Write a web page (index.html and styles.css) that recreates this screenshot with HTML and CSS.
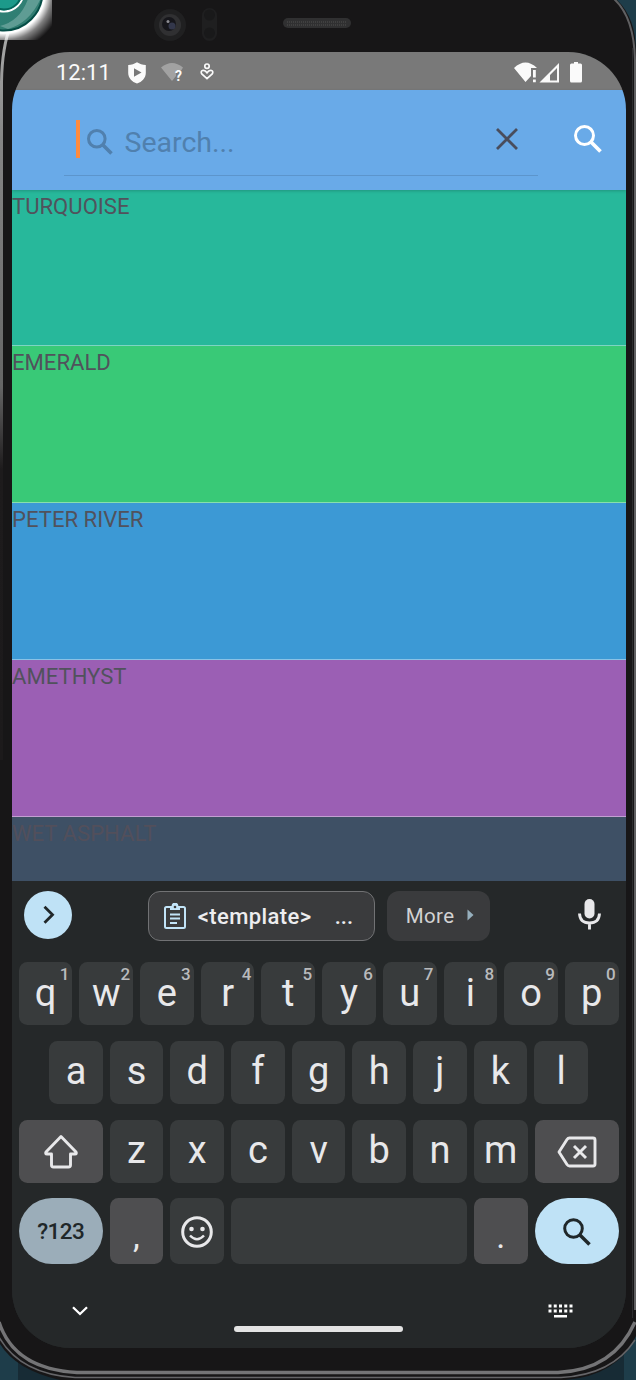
FILE: index.html
```html
<!DOCTYPE html>
<html lang="en">
<head>
<meta charset="utf-8">
<title>Color search</title>
<link rel="stylesheet" href="styles.css">
</head>
<body>
<div class="device">
<svg class="frame" viewBox="0 0 636 1380" aria-hidden="true">
  <defs>
    <linearGradient id="rimL" x1="0" y1="0" x2="0" y2="1380" gradientUnits="userSpaceOnUse"><stop offset="0" stop-color="#b4b4b4"/><stop offset=".1" stop-color="#868686"/><stop offset=".28" stop-color="#666"/><stop offset=".34" stop-color="#1d1b1c"/><stop offset="1" stop-color="#1a1819"/></linearGradient>
    <radialGradient id="glow" cx="4" cy="-8" r="59" gradientUnits="userSpaceOnUse"><stop offset=".7" stop-color="#fff"/><stop offset=".82" stop-color="#fff" stop-opacity=".45"/><stop offset="1" stop-color="#fff" stop-opacity="0"/></radialGradient>
    <linearGradient id="teal" x1="0" y1="0" x2="1" y2="1"><stop offset="0" stop-color="#8fd0c4"/><stop offset=".5" stop-color="#2b8377"/><stop offset="1" stop-color="#35796e"/></linearGradient>
  </defs>
  <rect width="636" height="1380" fill="#1e3d4a"/>
  <rect x="18" y="1340" width="606" height="40" fill="#172b35"/>
  <path d="M0 0H617Q636 18 636 52V1336Q617 1376 565 1380H60Q16 1370 0 1344Z" fill="#171617"/>
  <path d="M11 24Q2 47 1.500 82V760" fill="none" stroke="url(#rimL)" stroke-width="3"/>
  <path d="M613-2Q634 16 635 60V1310" fill="none" stroke="#606062" stroke-width="2"/>
  <path d="M632.500 48V1318" stroke="#2c2c2e" stroke-width="1"/>
  <path d="M-1 1322Q14 1369 77 1372.500H558Q614 1370 635 1322" fill="none" stroke="#747476" stroke-width="3.500"/>
  <path d="M-1 1337Q20 1374 75 1377.500H561Q612 1375 635 1340" fill="none" stroke="#656568" stroke-width="1.500"/>
  <circle cx="170" cy="25" r="16" fill="#202021"/><circle cx="170" cy="25" r="11" fill="#303032"/><circle cx="169" cy="24" r="7" fill="#16161b"/><circle cx="172" cy="26" r="3.500" fill="#33374b"/><circle cx="168" cy="21.500" r="1.500" fill="#8d8d93"/>
  <rect x="202" y="8" width="15" height="33" rx="7.500" fill="#1f1f20"/><circle cx="209.500" cy="15" r="5.500" fill="#19191a"/><circle cx="209.500" cy="33" r="5.500" fill="#19191a"/>
  <rect x="283" y="18" width="68" height="10" rx="5" fill="#303031"/><path d="M287 22H347M287 25H347" stroke="#454546" stroke-width="1.500" stroke-dasharray="1 1"/>
  <svg width="52" height="40" viewBox="0 0 52 40"><circle cx="4" cy="-8" r="60" fill="url(#glow)"/><circle cx="4" cy="-8" r="41" fill="#fff"/><circle cx="4" cy="-8" r="38.500" fill="url(#teal)" stroke="#064d46" stroke-width="2"/><path d="M0 26Q20 21 28-1L40 0Q29 23 8 29Z" fill="#73aaa3" opacity=".7"/><circle cx="4" cy="-8" r="19.500" fill="#1c9a8a" stroke="#fff" stroke-width="2"/><circle cx="4" cy="-8" r="17.500" fill="none" stroke="#05675c" stroke-width="2"/></svg>
</svg>

<main class="screen">
  <header class="status">
    <span class="clock">12:11</span>
    <svg class="st-shield" viewBox="0 0 18 22"><path d="M9 .3C6.500 2 3.500 2.800.2 3V11C.2 16 4 20 9 21.500C14 20 17.800 16 17.800 11V3C14.500 2.800 11.500 2 9 .3Z" fill="#fafafa"/><path d="M6 6.300V14.700L13.500 10.500Z" fill="#777"/></svg>
    <svg class="st-wifi" viewBox="0 0 23 19"><path d="M0 4.500Q11-4.500 22 4.500L20.500 7H15V13L11 18Z" fill="#a2a2a2"/><text x="14" y="17.500" class="q">?</text></svg>
    <svg class="st-heart" viewBox="0 0 14 18"><g fill="none" stroke="#fafafa" stroke-width="1.700"><circle cx="7" cy="3.200" r="2.200"/><path d="M7 15.700L1.800 11Q.3 8.500 2.500 7.500Q5 6.800 7 9.800Q9 6.800 11.500 7.500Q13.700 8.500 12.200 11Z"/></g></svg>
    <span class="spacer"></span>
    <svg class="st-net" viewBox="0 0 69 21"><g fill="#fafafa"><path d="M0 6Q11.500-5 23 6H17V14L11.500 20Z"/><path d="M19 8H21.800V15.500H19ZM19 17.500H21.800V20.300H19Z"/><path fill-rule="evenodd" d="M45 1V20.500H25.500ZM43 6L36 13V18.500H43Z"/><path d="M60 0H64V1.500H66.500Q68 1.500 68 3V19Q68 20.500 66.500 20.500H57.500Q56 20.500 56 19V3Q56 1.500 57.500 1.500H60Z"/></g></svg>
  </header>
  <div class="appbar">
    <div class="field">
      <i class="caret"></i>
      <svg class="ico-hint" viewBox="0 0 26 26"><g fill="none" stroke="#5080ae" stroke-width="3"><circle cx="9.800" cy="9.800" r="8.300"/><path d="M15.700 15.700L24.500 24.500" stroke-width="3.600"/></g></svg>
      <span class="hint">Search...</span>
      <svg class="ico-close" viewBox="0 0 22 22"><path d="M1 1L21 21M21 1L1 21" stroke="#494d5d" stroke-width="2.800"/></svg>
    </div>
    <svg class="ico-search" viewBox="0 0 28 28"><g fill="none" stroke="#fff" stroke-width="3"><circle cx="10.500" cy="10.500" r="9"/><path d="M17 17L26.500 26.500" stroke-width="3.700"/></g></svg>
  </div>
  <div class="colors">
    <div class="color turquoise">TURQUOISE</div>
    <div class="color emerald">EMERALD</div>
    <div class="color river">PETER RIVER</div>
    <div class="color amethyst">AMETHYST</div>
    <div class="color asphalt">WET ASPHALT</div>
  </div>
  <section class="keyboard">
    <div class="suggest">
      <div class="expand"><svg width="12" height="20" viewBox="0 0 12 20"><path d="M1.500 1.700L9.500 9.700L1.500 17.700" fill="none" stroke="#202729" stroke-width="2.800"/></svg></div>
      <div class="clip"><svg width="24" height="27" viewBox="0 0 24 27"><g fill="none" stroke="#c2e4f8" stroke-width="2"><rect x="2" y="4" width="20" height="21" rx="1.500"/><path d="M7 11.500H17M7 15.500H17M7 20H14"/></g><path d="M7 3H8.600A3.400 3.400 0 0 1 15.400 3H17V7H7Z" fill="#c2e4f8"/><circle cx="12" cy="4" r="1.300" fill="#3a3b3d"/></svg><span class="cliptext">&lt;template&gt;</span><span class="dots">...</span></div>
      <div class="more"><span>More</span><svg width="7" height="12" viewBox="0 0 7 12"><path d="M.5.500L6.500 6L.5 11.500Z" fill="#96afbd"/></svg></div>
      <svg class="mic" viewBox="0 0 23 31"><rect x="6.500" y="0" width="10" height="19.500" rx="5" fill="#e8e8ea"/><path d="M1.500 14.500Q2 24 11.500 24T21.500 14.500M11.500 24V30.500" fill="none" stroke="#e8e8ea" stroke-width="2.900"/></svg>
    </div>
    <div class="row">
      <div class="key">q<sup>1</sup></div><div class="key">w<sup>2</sup></div><div class="key">e<sup>3</sup></div><div class="key">r<sup>4</sup></div><div class="key">t<sup>5</sup></div><div class="key">y<sup>6</sup></div><div class="key">u<sup>7</sup></div><div class="key">i<sup>8</sup></div><div class="key">o<sup>9</sup></div><div class="key">p<sup>0</sup></div>
    </div>
    <div class="row home">
      <div class="key">a</div><div class="key">s</div><div class="key">d</div><div class="key">f</div><div class="key">g</div><div class="key">h</div><div class="key">j</div><div class="key">k</div><div class="key">l</div>
    </div>
    <div class="row">
      <div class="key wide gray"><svg width="36" height="35" viewBox="0 0 36 35"><path d="M18 2.500L33 18Q34 20 32 20H27.500V31Q27.500 33 25.500 33H10.500Q8.500 33 8.500 31V20H4Q2 20 3 18Z" fill="none" stroke="#e8e8ea" stroke-width="2.900" stroke-linejoin="round"/></svg></div>
      <div class="key">z</div><div class="key">x</div><div class="key">c</div><div class="key">v</div><div class="key">b</div><div class="key">n</div><div class="key">m</div>
      <div class="key wide gray"><svg width="40" height="32" viewBox="0 0 40 32"><g fill="none" stroke="#e8e8ea" stroke-width="2.900" stroke-linejoin="round"><path d="M12.500 2H36Q38 2 38 4V28Q38 30 36 30H12.500Q11 30 10 28.500L2 16L10 3.500Q11 2 12.500 2Z"/><path d="M17 10L29 22M29 10L17 22"/></g></svg></div>
    </div>
    <div class="row last">
      <div class="key wide sym">?123</div>
      <div class="key gray punct">,</div>
      <div class="key"><svg width="32" height="32" viewBox="0 0 32 32"><circle cx="16" cy="16" r="14.300" fill="none" stroke="#e8e8ea" stroke-width="3"/><circle cx="10.500" cy="13" r="2.300" fill="#e8e8ea"/><circle cx="21.500" cy="13" r="2.300" fill="#e8e8ea"/><path d="M9 19.500Q16 27 23 19.500" fill="none" stroke="#e8e8ea" stroke-width="2.500"/></svg></div>
      <div class="key space"></div>
      <div class="key gray punct">.</div>
      <div class="key wide enter"><svg width="28" height="28" viewBox="0 0 28 28"><g fill="none" stroke="#202729" stroke-width="3"><circle cx="10.500" cy="10.500" r="8.800"/><path d="M16.700 16.700L26.500 26.500" stroke-width="3.500"/></g></svg></div>
    </div>
    <footer class="nav">
      <svg class="hide" viewBox="0 0 16 10"><path d="M1 1.200L8 8L15 1.200" fill="none" stroke="#fff" stroke-width="2.300"/></svg>
      <i class="pill"></i>
      <svg class="kbd" viewBox="0 0 25 14"><path d="M.5 2H25M.5 7H25" stroke="#fff" stroke-width="3" stroke-dasharray="3 2.250"/><path d="M6 12.300H19" stroke="#fff" stroke-width="2.500"/></svg>
    </footer>
  </section>
</main>
</div>
</body>
</html>
```
FILE: styles.css
```css
* { box-sizing: border-box; }
body { margin: 0; font-family: Roboto, "Liberation Sans", sans-serif; background: #171617; }
svg { display: block; flex: none; }
.device { position: relative; width: 636px; height: 1380px; padding: 52px 10px 32px 12px; overflow: hidden; }
.frame { position: absolute; left: 0; top: 0; width: 636px; height: 1380px; }
.screen { position: relative; width: 614px; height: 1296px; border-radius: 58px; overflow: hidden; display: flex; flex-direction: column; background: #252829; }

.status { height: 37.500px; flex: none; background: #797979; display: flex; align-items: flex-start; padding: 0 44px; }
.clock { width: 72px; font-size: 22px; line-height: 41px; color: #fafafa; }
.st-shield { width: 18px; height: 22px; margin-top: 9.500px; }
.st-wifi { width: 23px; height: 19px; margin: 10.500px 0 0 15px; }
.q { font-size: 14px; font-weight: 700; fill: #fafafa; }
.st-heart { width: 14px; height: 18px; margin: 11px 0 0 16px; }
.spacer { flex: 1; }
.st-net { width: 69px; height: 21px; margin: 9.500px -1px 0 0; }

.appbar { height: 100px; flex: none; display: flex; align-items: flex-start; padding: 0 24px 0 52px; background: #69aae8; position: relative; z-index: 1; box-shadow: 0 1px 3px rgba(0,0,0,.2); }
.field { width: 474px; height: 86.500px; display: flex; align-items: flex-start; border-bottom: 1px solid #5c95cc; padding-left: 11.500px; }
.caret { width: 4px; height: 38px; margin-top: 30px; background: #ff8b3d; }
.ico-hint { width: 26px; height: 26px; margin: 39.500px 0 0 7px; }
.hint { flex: 1; padding-left: 12px; font-size: 28.500px; line-height: 32px; margin-top: 37px; color: #5080ae; }
.ico-close { width: 22px; height: 22px; margin: 38px 20px 0 0; }
.ico-search { width: 28px; height: 28px; margin: 35.500px 0 0 auto; }

.colors { flex: none; height: 691px; overflow: hidden; }
.color { height: 156.900px; font-size: 22.100px; line-height: 32.500px; color: #51525c; border-bottom: 1px solid rgba(255,255,255,.4); }
.turquoise { background: #27b89b; }
.emerald { background: #39c977; }
.river { background: #3c99d5; }
.amethyst { background: #9b5fb4; }
.asphalt { background: #3e5065; color: #524f5b; }

.keyboard { flex: 1; padding: 10.500px 7.500px 0 6.700px; background: #252829; }
.suggest { height: 50px; display: flex; align-items: center; padding: 0 18px 0 5.500px; margin-bottom: 21px; }
.expand { width: 48px; height: 48px; border-radius: 50%; background: #bfe2f6; display: flex; align-items: center; justify-content: center; margin: -2px 75.500px 0 0; }
.expand svg { margin-left: 1px; }
.clip { width: 227px; height: 50px; border: 1.500px solid #717274; border-radius: 12px; background: #3a3b3d; display: flex; align-items: center; padding-left: 14.500px; color: #ededef; font-size: 22px; font-weight: 500; margin-right: 12px; }
.cliptext { width: 137px; margin-left: 10.500px; letter-spacing: .4px; }
.more { width: 103px; height: 50px; border-radius: 12px; background: #3a3b3d; display: flex; align-items: center; padding-left: 19px; font-size: 20.500px; color: #d2d2d3; letter-spacing: .4px; }
.more svg { margin: -2px 0 0 12px; }
.mic { width: 23px; height: 31px; margin: -3px 0 0 auto; }

.row { height: 63.200px; display: flex; gap: 7px; margin-bottom: 15.600px; }
.home { padding: 0 30.500px; }
.key { position: relative; flex: 1; display: flex; align-items: center; justify-content: center; border-radius: 8.500px; background: #383b3c; color: #e8e8ea; font-size: 38px; line-height: 61px; padding-bottom: 1px; }
.key svg { margin-top: 2px; }
.key sup { position: absolute; top: 2.500px; right: 3px; font-size: 17px; font-weight: 500; line-height: 18px; color: #b9babc; }
.wide { flex: 0 0 84px; }
.gray { background: #4e4e50; }
.last { height: 65.500px; margin-bottom: 0; }
.last .key { flex: 0 0 53.500px; }
.last .wide { flex-basis: 84px; }
.last .space { flex: 1; }
.last .sym { border-radius: 33px; background: #9badb9; color: #202729; font-size: 22.500px; font-weight: 500; letter-spacing: -.6px; padding-top: 2px; }
.punct { padding-top: 12px; font-size: 34px; }
.enter { border-radius: 33px; background: #bfe2f6; }
.nav { display: flex; padding: 40px 46px 0 53px; align-items: flex-start; }
.hide { width: 16px; height: 10px; margin-top: 2px; }
.pill { width: 169px; height: 6.500px; border-radius: 4px; background: #e3e3e3; margin: 22px 0 0 146px; }
.kbd { width: 25px; height: 14px; margin-left: auto; }
```
